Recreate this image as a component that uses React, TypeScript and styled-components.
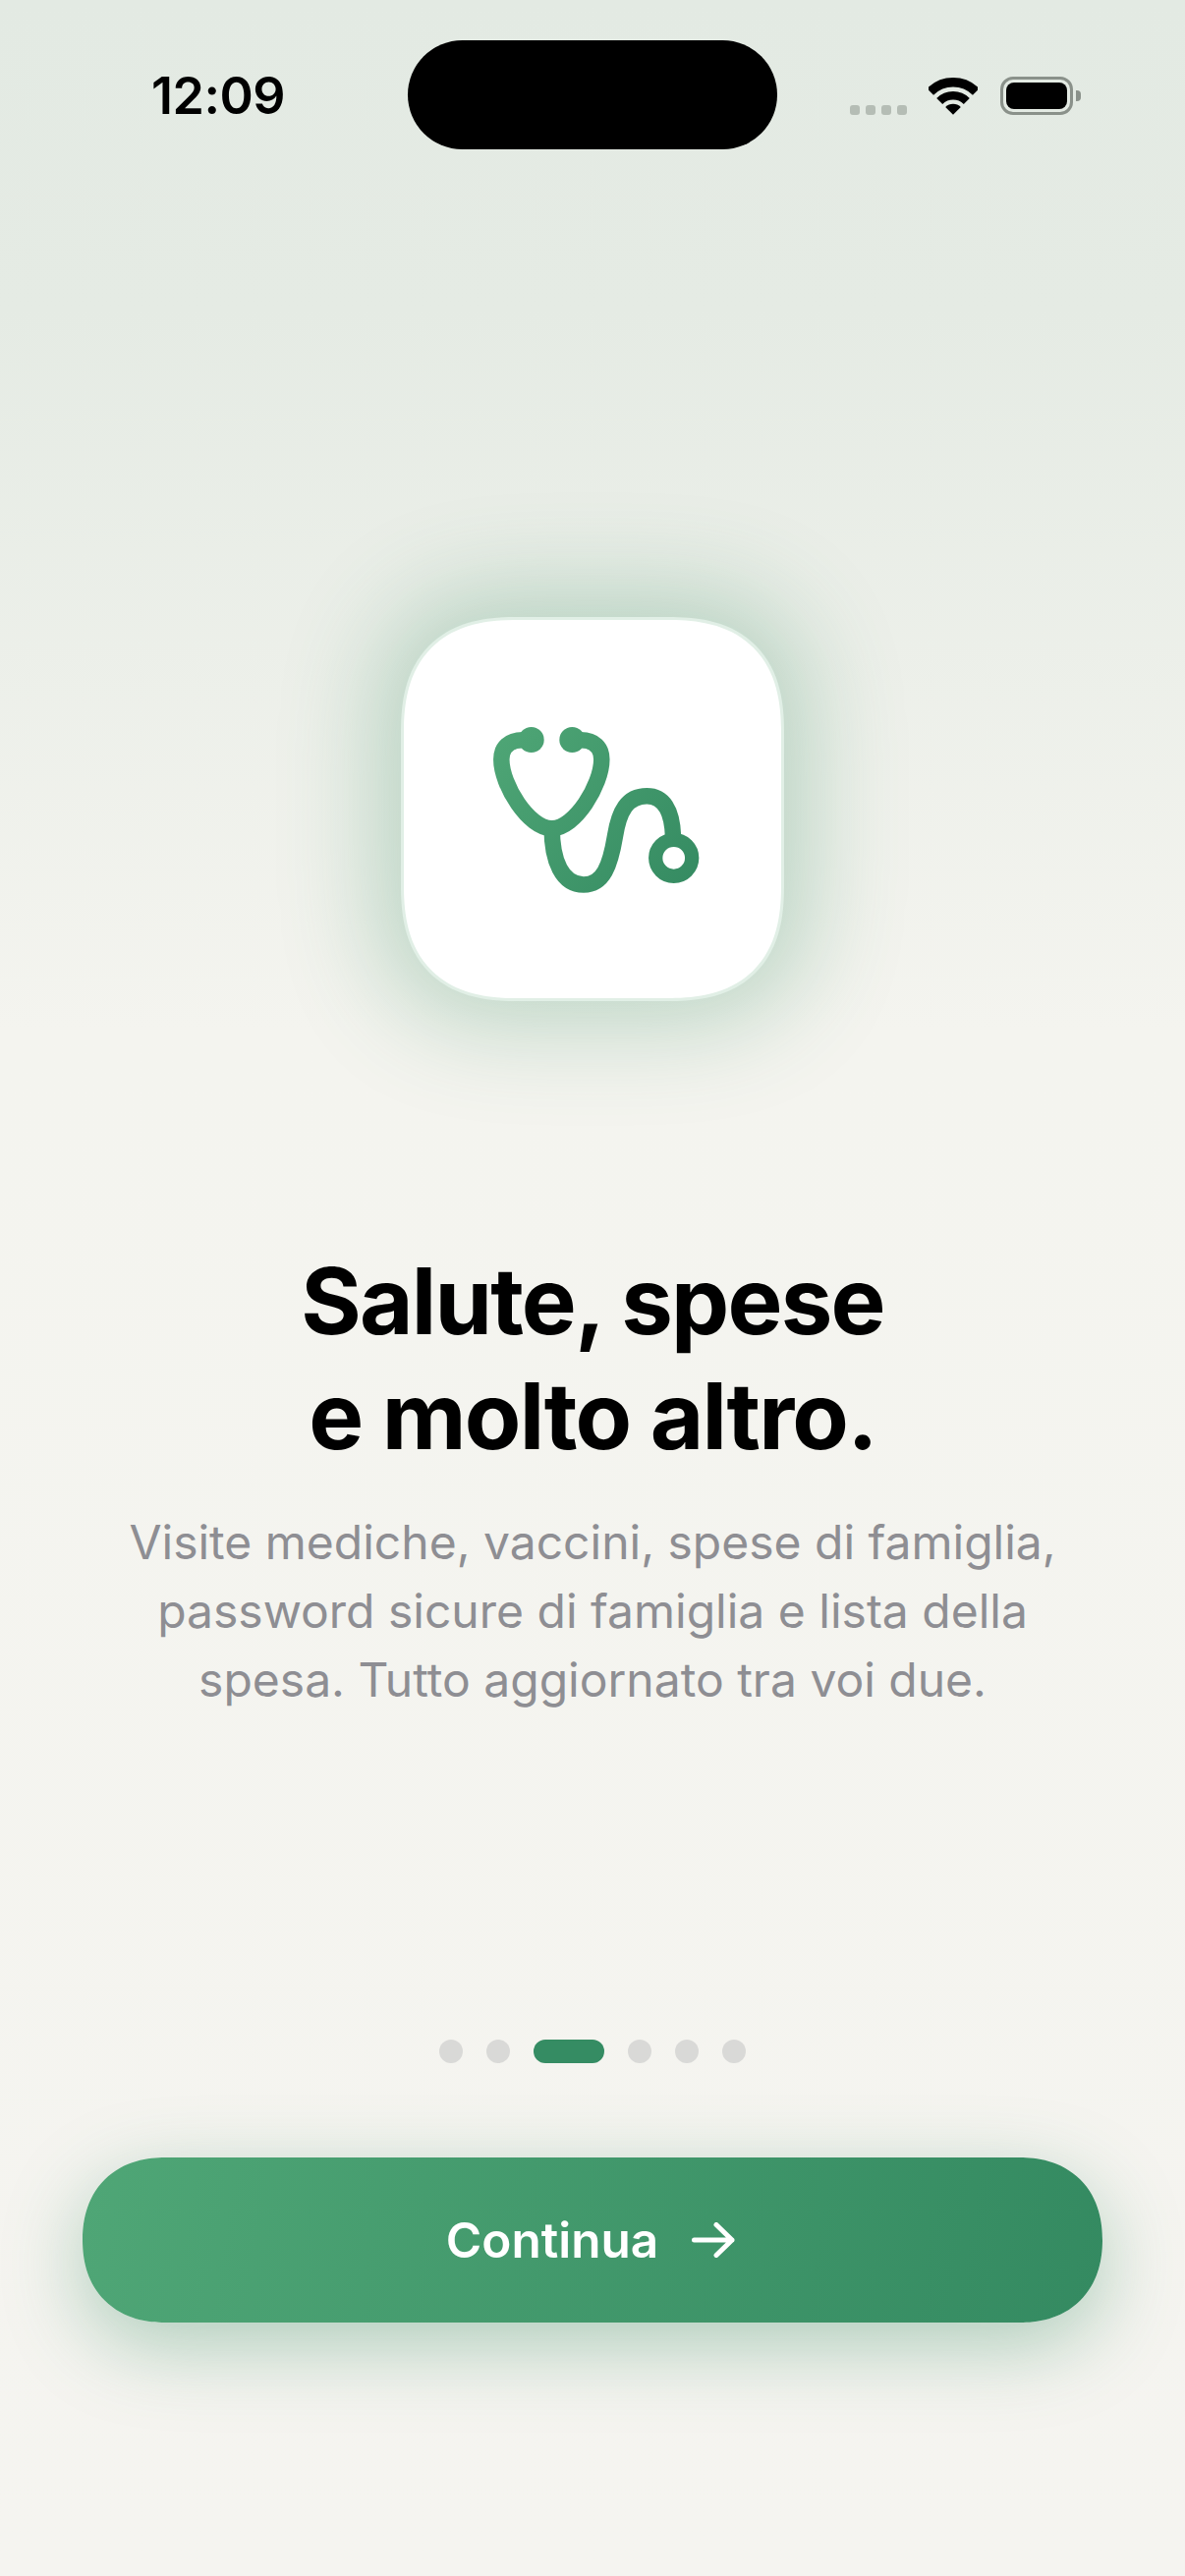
import styled, { createGlobalStyle } from "styled-components";

const GlobalStyle = createGlobalStyle`
  html, body {
    margin: 0;
    padding: 0;
    background: #f5f4f0;
  }
  * {
    box-sizing: border-box;
  }
`;

const FONT = `Inter, "Liberation Sans", sans-serif`;
const PAGE_DOTS = [false, false, true, false, false, false];

const Page = styled.div`
  width: 1206px;
  height: 2622px;
  overflow: hidden;
  display: flex;
  flex-direction: column;
  align-items: center;
  font-family: ${FONT};
  background: linear-gradient(180deg, #e3eae3 0%, #e5ebe4 12%, #f4f4ef 40%, #f5f4f0 100%);
`;

const StatusBar = styled.div`
  width: 100%;
  height: 152px;
  padding-top: 41px;
  display: grid;
  grid-template-columns: 415px 376px 1fr;
`;

const Time = styled.div`
  padding: 29px 0 0 154px;
  font-size: 52px;
  line-height: 56px;
  font-weight: 600;
  color: #000;
  letter-spacing: -0.5px;
`;

const Island = styled.div`
  height: 111px;
  border-radius: 56px;
  background: #000;
`;

const StatusIcons = styled.div`
  height: 76px;
  padding: 37px 0 0 74px;
  display: flex;
  align-items: flex-end;
`;

const SignalDots = styled.div`
  display: flex;
  gap: 6px;
  margin-right: 22px;
`;

const SignalDot = styled.span`
  width: 10px;
  height: 10px;
  border-radius: 3px;
  background: #b5bdb5;
`;

const WifiIcon = styled.svg`
  display: block;
  margin-right: 23px;
`;

const Battery = styled.div`
  position: relative;
  width: 74px;
  height: 39px;
  padding: 3px;
  border: 3px solid #8a918a;
  border-radius: 13px;

  &::after {
    content: "";
    position: absolute;
    right: -11px;
    top: 11px;
    width: 5px;
    height: 11px;
    border-radius: 0 4px 4px 0;
    background: #8a918a;
  }
`;

const BatteryFill = styled.div`
  height: 100%;
  border-radius: 8px;
  background: #000;
`;

const Tile = styled.div`
  width: 390px;
  height: 391px;
  margin-top: 476px;
  border: 3px solid #e1efe6;
  border-radius: 118px;
  corner-shape: superellipse(1.3);
  background: #fff;
  display: flex;
  align-items: center;
  justify-content: center;
  box-shadow: 0 0 100px 22px rgba(52, 138, 97, 0.3);
`;

const Title = styled.h1`
  margin: 247px 0 0;
  font-size: 94px;
  line-height: 117px;
  font-weight: 700;
  letter-spacing: -1.8px;
  text-align: center;
  color: #000;
`;

const Subtitle = styled.p`
  margin: 35px 0 0;
  font-size: 48px;
  line-height: 70px;
  font-weight: 400;
  text-align: center;
  color: #8e8e93;
`;

const Pager = styled.div`
  margin-top: auto;
  display: flex;
  gap: 24px;
`;

const PagerDot = styled.span<{ $active?: boolean }>`
  width: ${({ $active }) => ($active ? "72px" : "24px")};
  height: 24px;
  border-radius: 12px;
  background: ${({ $active }) => ($active ? "#358c63" : "#d9d9d7")};
`;

const ContinueButton = styled.button`
  width: 1038px;
  height: 168px;
  margin: 96px 0 258px;
  padding: 0 4px 0 0;
  border: 0;
  border-radius: 84px;
  corner-shape: superellipse(1.15);
  background: linear-gradient(100deg, #4fa676 0%, #348a61 100%);
  box-shadow: 0 24px 80px rgba(52, 138, 97, 0.36);
  display: flex;
  align-items: center;
  justify-content: center;
  gap: 34px;
  color: #fff;
  font-family: ${FONT};
  font-size: 49.5px;
  font-weight: 600;
`;

const ArrowIcon = styled.svg`
  display: block;
`;

const App = () => {
  return (
    <Page>
      <GlobalStyle />
      <StatusBar>
        <Time>12:09</Time>
        <Island />
        <StatusIcons>
          <SignalDots>
            {[0, 1, 2, 3].map((i) => (
              <SignalDot key={i} />
            ))}
          </SignalDots>
          <WifiIcon width="50" height="38" viewBox="0 0 50 38">
            <g fill="none" stroke="#000">
              <path d="M1.7 14.4A33 33 0 0 1 48.3 14.4" strokeWidth="9.5" />
              <path d="M11.2 23.9A19.5 19.5 0 0 1 38.8 23.9" strokeWidth="8.5" />
            </g>
            <path d="M25 37.7L17.2 29.9A11 11 0 0 1 32.8 29.9Z" fill="#000" />
          </WifiIcon>
          <Battery>
            <BatteryFill />
          </Battery>
        </StatusIcons>
      </StatusBar>

      <Tile>
        <svg width="240" height="220" viewBox="3 3 240 220">
          <defs>
            <linearGradient id="steth" gradientUnits="userSpaceOnUse" x1="22" y1="29" x2="232" y2="198">
              <stop offset="0" stopColor="#4fa676" />
              <stop offset="1" stopColor="#348a61" />
            </linearGradient>
          </defs>
          <g fill="none" stroke="url(#steth)" strokeWidth="16.5">
            <path d="M52 42.3C38 42.3 30.3 50 30.3 62C30.3 88 58 132.3 81.7 132.3C105 132.3 132.3 88 132.3 62C132.3 50 125 42.3 111 42.3" />
            <path d="M81.7 132.3C81.7 165 92 189.5 114 189.5C134 189.5 141 170 146 140C150 115 158 99.3 178.3 99.3C195 99.3 204 113 205 140" />
            <circle cx="205.7" cy="162.3" r="18.5" strokeWidth="14.3" />
          </g>
          <circle cx="60.7" cy="42" r="13" fill="url(#steth)" />
          <circle cx="102.3" cy="42" r="13" fill="url(#steth)" />
        </svg>
      </Tile>

      <Title>
        Salute, spese
        <br />e molto altro.
      </Title>
      <Subtitle>
        Visite mediche, vaccini, spese di famiglia,
        <br />
        password sicure di famiglia e lista della
        <br />
        spesa. Tutto aggiornato tra voi due.
      </Subtitle>

      <Pager>
        {PAGE_DOTS.map((active, i) => (
          <PagerDot key={i} $active={active} />
        ))}
      </Pager>

      <ContinueButton>
        Continua
        <ArrowIcon width="44" height="36" viewBox="0 0 44 36">
          <path
            d="M2.5 18H41M25 2.5L41 18L25 33.5"
            fill="none"
            stroke="#fff"
            strokeWidth="5"
            strokeLinecap="round"
            strokeLinejoin="round"
          />
        </ArrowIcon>
      </ContinueButton>
    </Page>
  );
};

export default App;
